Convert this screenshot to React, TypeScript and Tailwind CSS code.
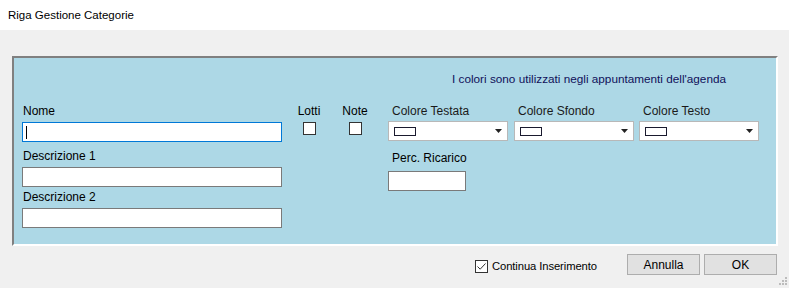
import React from "react";

const font = { fontFamily: '"Liberation Sans", Arial, sans-serif' };

function TextBox({ w, focused }: { w: string; focused?: boolean }) {
  return (
    <div
      className={`${w} h-[20px] bg-white border ${focused ? "border-[#0078d7]" : "border-[#7a7a7a]"} relative`}
    >
      {focused && <div className="absolute left-[3px] top-[3px] w-[1px] h-[13px] bg-black" />}
    </div>
  );
}

function Check({ checked }: { checked?: boolean }) {
  return (
    <div className="w-[13px] h-[13px] bg-white border border-[#333333] flex items-center justify-center">
      {checked && (
        <svg width="11" height="11" viewBox="0 0 11 11">
          <path d="M1.5 5.5 L4.2 8.2 L9.5 2.5" fill="none" stroke="#333" strokeWidth="1" />
        </svg>
      )}
    </div>
  );
}

function ColorCombo({ label }: { label: string }) {
  return (
    <div className="flex flex-col">
      <div className="h-[16px] pl-[4px] text-[12px] leading-[16px] text-[#1a1a1a]">{label}</div>
      <div className="mt-[2px] w-[120px] h-[20px] bg-white border border-[#b8b8b8] flex items-center pl-[5px] pr-[5px]">
        <div className="w-[22px] h-[9px] border border-[#1a1a2e] bg-white" />
        <div className="flex-1" />
        <svg width="7" height="4" viewBox="0 0 7 4">
          <path d="M0 0 H7 L3.5 4 Z" fill="#222" />
        </svg>
      </div>
    </div>
  );
}

export default function App() {
  return (
    <div className="w-[789px] h-[288px] bg-[#f0f0f0] flex flex-col text-[12px] text-black" style={font}>
      <div className="h-[30px] bg-white pl-[8px] flex items-center text-[11.5px] leading-[16px] pb-[1px]">
        Riga Gestione Categorie
      </div>
      <div className="pt-[26px] pl-[12px]">
        <div className="w-[766px] h-[190px] bg-[#add8e6] border-2 border-t-[#808080] border-l-[#808080] border-r-white border-b-white flex flex-col">
          <div className="pt-[13px] h-[29px] flex justify-end pr-[50px] leading-[16px] text-[11.75px] text-[#10105a]">
            I colori sono utilizzati negli appuntamenti dell'agenda
          </div>
          <div className="mt-[16px] pl-[8px] flex items-start leading-[16px]">
            <div className="flex flex-col w-[260px]">
              <div className="h-[16px] pl-[1px]">Nome</div>
              <div className="mt-[3px]">
                <TextBox w="w-[260px]" focused />
              </div>
              <div className="mt-[6px] h-[16px] pl-[1px]">Descrizione 1</div>
              <div className="mt-[3px]">
                <TextBox w="w-[260px]" />
              </div>
              <div className="mt-[2px] h-[16px] pl-[1px]">Descrizione 2</div>
              <div className="mt-[3px]">
                <TextBox w="w-[260px]" />
              </div>
            </div>
            <div className="ml-[14px] w-[26px] flex flex-col items-center">
              <div className="h-[16px]">Lotti</div>
              <div className="mt-[3px]">
                <Check />
              </div>
            </div>
            <div className="ml-[20px] w-[26px] flex flex-col items-center">
              <div className="h-[16px]">Note</div>
              <div className="mt-[3px]">
                <Check />
              </div>
            </div>
            <div className="ml-[20px] flex flex-col">
              <ColorCombo label="Colore Testata" />
              <div className="mt-[9px] h-[16px] pl-[4px]">Perc. Ricarico</div>
              <div className="mt-[5px]">
                <TextBox w="w-[78px]" />
              </div>
            </div>
            <div className="ml-[6px]">
              <ColorCombo label="Colore Sfondo" />
            </div>
            <div className="ml-[5px]">
              <ColorCombo label="Colore Testo" />
            </div>
          </div>
        </div>
      </div>
      <div className="mt-[8px] flex items-start relative flex-1 pr-[12px]">
        <div className="ml-[475px] mt-[5px] flex items-center">
          <Check checked />
          <span className="ml-[4px] leading-[14px] text-[11.25px] tracking-[-0.1px]">Continua Inserimento</span>
        </div>
        <button className="ml-auto w-[73px] h-[21px] bg-[#e1e1e1] border border-[#adadad] leading-[16px]">
          Annulla
        </button>
        <button className="ml-[4px] w-[73px] h-[21px] bg-[#e1e1e1] border border-[#adadad] leading-[16px]">
          OK
        </button>
        <svg className="absolute right-[1px] bottom-[2px]" width="9" height="9" viewBox="0 0 9 9">
          <rect x="6" y="0" width="2" height="2" fill="#bcbcbc" />
          <rect x="3" y="3" width="2" height="2" fill="#bcbcbc" />
          <rect x="6" y="3" width="2" height="2" fill="#bcbcbc" />
          <rect x="0" y="6" width="2" height="2" fill="#bcbcbc" />
          <rect x="3" y="6" width="2" height="2" fill="#bcbcbc" />
          <rect x="6" y="6" width="2" height="2" fill="#bcbcbc" />
        </svg>
      </div>
    </div>
  );
}
